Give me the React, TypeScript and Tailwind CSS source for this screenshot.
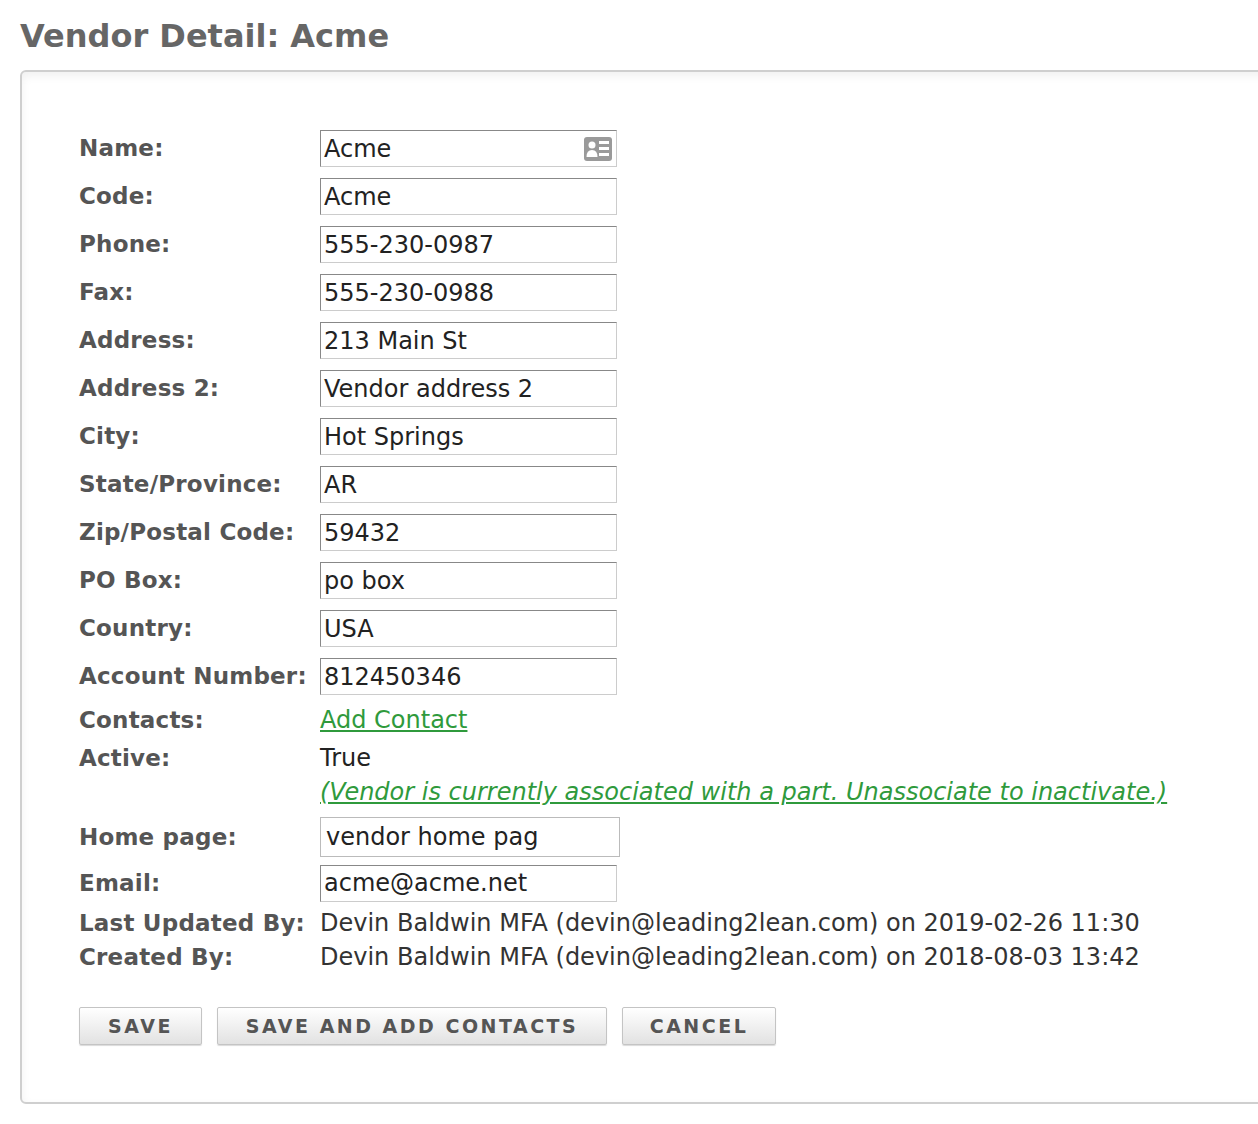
import React from "react";

const font = { fontFamily: '"DejaVu Sans", Verdana, sans-serif' };

const fields: [string, string][] = [
  ["Code:", "Acme"],
  ["Phone:", "555-230-0987"],
  ["Fax:", "555-230-0988"],
  ["Address:", "213 Main St"],
  ["Address 2:", "Vendor address 2"],
  ["City:", "Hot Springs"],
  ["State/Province:", "AR"],
  ["Zip/Postal Code:", "59432"],
  ["PO Box:", "po box"],
  ["Country:", "USA"],
  ["Account Number:", "812450346"],
];

function Label({ children }: { children: React.ReactNode }) {
  return <div className="w-[241px] shrink-0 font-bold text-[23px] text-[#555] tracking-[0.2px]">{children}</div>;
}

function Input({ value, icon, w = "w-[297px]" }: { value: string; icon?: boolean; w?: string }) {
  return (
    <div className={`${w} h-[37px] flex items-center justify-between border border-[#ccc] border-t-[#888] border-l-[#888] bg-white pl-[3px] pr-[3px] text-[#222]`}>
      <span>{value}</span>
      {icon && (
        <svg width="30" height="26" viewBox="0 0 30 26">
          <rect x="1" y="1" width="28" height="24" rx="3" fill="#9a9a9a" />
          <circle cx="9" cy="9" r="3.5" fill="#fff" />
          <path d="M3.5 21 q0-7 5.5-7 q5.5 0 5.5 7z" fill="#fff" />
          <rect x="16" y="5" width="10" height="3" fill="#fff" />
          <rect x="16" y="11" width="10" height="3" fill="#fff" />
          <rect x="16" y="17" width="10" height="3" fill="#fff" />
        </svg>
      )}
    </div>
  );
}

function Btn({ children, w }: { children: React.ReactNode; w: string }) {
  return (
    <button className={`${w} h-[38px] border border-[#c4c4c4] rounded-[2px] bg-gradient-to-b from-white to-[#e2e2e2] text-[#555] font-bold text-[19px] tracking-[2.5px] shadow-[0_1px_1px_rgba(0,0,0,0.15)]`}>
      {children}
    </button>
  );
}

export default function App() {
  return (
    <div className="bg-white w-[1258px] h-[1124px] overflow-hidden text-[24px]" style={font}>
      <h1 className="pl-[20px] pt-[14px] h-[70px] text-[32px] font-bold text-[#666] leading-[44px]">Vendor Detail: Acme</h1>
      <div className="ml-[20px] w-[1260px] h-[1034px] border-2 border-[#cfcfcf] rounded-[6px] shadow-[inset_0_4px_10px_rgba(0,0,0,0.06)] pl-[57px] pt-[58px]">
        <div className="flex items-center h-[48px] pb-[11px]">
          <Label>Name:</Label>
          <Input value="Acme" icon />
        </div>
        {fields.map(([l, v]) => (
          <div key={l} className="flex items-center h-[48px] pb-[11px]">
            <Label>{l}</Label>
            <Input value={v} />
          </div>
        ))}
        <div className="flex items-center h-[38px] -mt-[5px]">
          <Label>Contacts:</Label>
          <a className="text-[#2f9a3c] underline">Add Contact</a>
        </div>
        <div className="flex items-center h-[38px]">
          <Label>Active:</Label>
          <span className="text-[#222]">True</span>
        </div>
        <div className="flex items-center h-[30px]">
          <Label>{""}</Label>
          <span className="text-[#2f9a3c] underline italic">(Vendor is currently associated with a part. Unassociate to inactivate.)</span>
        </div>
        <div className="flex items-center h-[46px] mt-[7px]">
          <Label>Home page:</Label>
          <div className="w-[300px] h-[40px] flex items-center border border-[#bbb] bg-white pl-[5px] text-[#222]">vendor home pag</div>
        </div>
        <div className="flex items-center h-[46px]">
          <Label>Email:</Label>
          <Input value="acme@acme.net" />
        </div>
        <div className="flex items-center h-[34px]">
          <Label>Last Updated By:</Label>
          <span className="text-[#333]">Devin Baldwin MFA (devin@leading2lean.com) on 2019-02-26 11:30</span>
        </div>
        <div className="flex items-center h-[34px]">
          <Label>Created By:</Label>
          <span className="text-[#333]">Devin Baldwin MFA (devin@leading2lean.com) on 2018-08-03 13:42</span>
        </div>
        <div className="flex gap-[15px] mt-[33px]">
          <Btn w="w-[123px]">SAVE</Btn>
          <Btn w="w-[390px]">SAVE AND ADD CONTACTS</Btn>
          <Btn w="w-[154px]">CANCEL</Btn>
        </div>
      </div>
    </div>
  );
}
